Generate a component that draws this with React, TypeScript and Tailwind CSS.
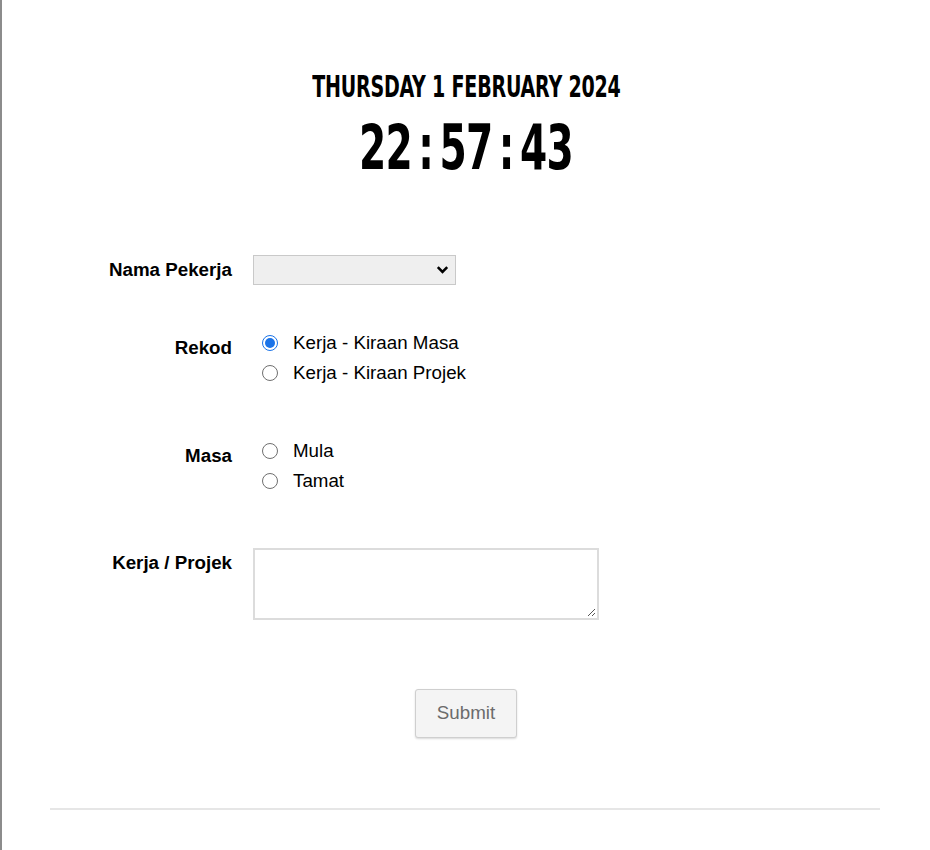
import React from "react";

const labelCls =
  "w-[230px] shrink-0 text-right font-bold text-[18.75px] leading-[29px] text-black";

function Radio({ checked, label }: { checked?: boolean; label: string }) {
  return (
    <label className="flex items-center h-[30px]">
      <span className="w-[16px] flex items-center justify-center ml-[9px]">
        {checked ? (
          <span className="w-[16px] h-[16px] rounded-full border-[1.5px] border-[#1a73e8] flex items-center justify-center">
            <span className="w-[10px] h-[10px] rounded-full bg-[#1a73e8]" />
          </span>
        ) : (
          <span className="w-[16px] h-[16px] rounded-full border-[1.5px] border-[#6f6f6f]" />
        )}
      </span>
      <span className="ml-[15px] text-[18.75px] text-black">{label}</span>
    </label>
  );
}

export default function App() {
  return (
    <div
      className="min-h-[850px] bg-white border-l-2 border-[#8c8c8c] relative"
      style={{ fontFamily: '"Liberation Sans", Arial, sans-serif' }}
    >
      <div
        className="pt-[70px] flex flex-col items-center text-black font-bold"
        style={{ fontFamily: '"DejaVu Sans Condensed", "DejaVu Sans", sans-serif' }}
      >
        <div className="inline-block scale-x-[0.706] text-[30px] leading-[34px] tracking-[-0.3px]">
          THURSDAY 1 FEBRUARY 2024
        </div>
        <div className="inline-block scale-x-[0.69] mt-[14px] text-[63px] leading-[60px] tracking-[-1px]">
          22<span className="mx-[9px]">:</span>57<span className="mx-[9px]">:</span>43
        </div>
      </div>

      <div className="mt-[77px]">
        <div className="flex items-start">
          <div className={labelCls}>Nama Pekerja</div>
          <div className="ml-[21px] relative w-[203px] h-[30px] bg-[#efefef] border border-[#c9c9c9]">
            <svg
              className="absolute right-[6px] top-[9px]"
              width="13"
              height="10"
              viewBox="0 0 13 10"
            >
              <path d="M1.8 2.2 L6.5 6.9 L11.2 2.2" fill="none" stroke="#000" strokeWidth="2.6" />
            </svg>
          </div>
        </div>

        <div className="flex items-start mt-[43px]">
          <div className={labelCls + " mt-[5px]"}>Rekod</div>
          <div className="ml-[21px] flex flex-col">
            <Radio checked label="Kerja - Kiraan Masa" />
            <Radio label="Kerja - Kiraan Projek" />
          </div>
        </div>

        <div className="flex items-start mt-[48px]">
          <div className={labelCls + " mt-[5px]"}>Masa</div>
          <div className="ml-[21px] flex flex-col">
            <Radio label="Mula" />
            <Radio label="Tamat" />
          </div>
        </div>

        <div className="flex items-start mt-[52px]">
          <div className={labelCls}>Kerja / Projek</div>
          <div className="ml-[21px] relative w-[346px] h-[72px] bg-white border-2 border-[#dcdcdc]">
            <svg className="absolute right-[1px] bottom-[1px]" width="10" height="10" viewBox="0 0 10 10">
              <path d="M9 2 L2 9 M9 6 L6 9" stroke="#555" strokeWidth="1" />
            </svg>
          </div>
        </div>

        <div className="flex justify-center mt-[69px]">
          <button className="w-[102px] h-[49px] bg-[#f4f4f4] border border-[#cfcfcf] rounded-[3px] shadow-[0_1px_2px_rgba(0,0,0,0.15)] text-[18.75px] text-[#6b6b6b]">
            Submit
          </button>
        </div>

        <div className="ml-[48px] mr-[50px] mt-[70px] h-[2px] bg-[#e6e6e6]" />
      </div>
    </div>
  );
}
